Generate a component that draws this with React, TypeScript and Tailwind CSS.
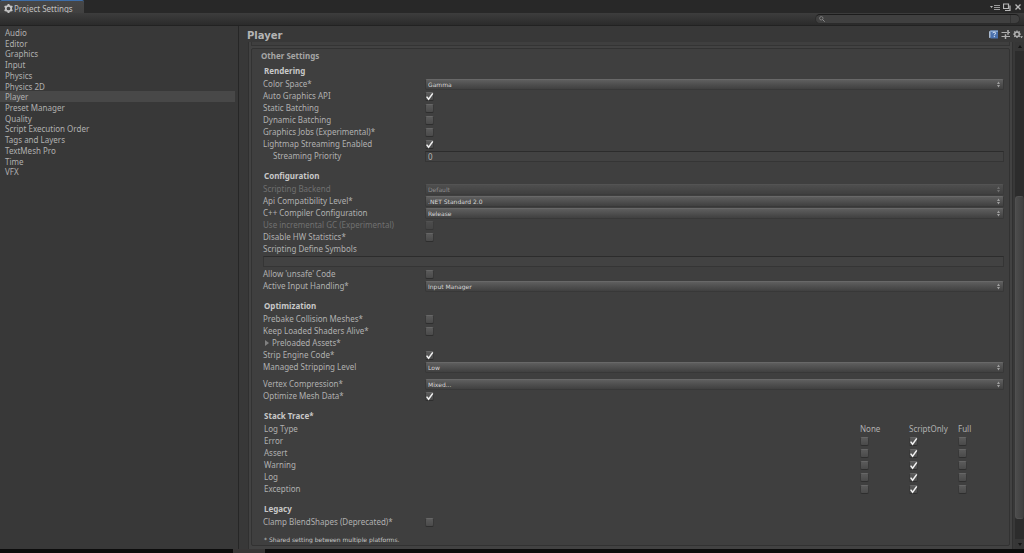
import { useState, type ReactNode } from 'react'

const categories = [
  'Audio',
  'Editor',
  'Graphics',
  'Input',
  'Physics',
  'Physics 2D',
  'Player',
  'Preset Manager',
  'Quality',
  'Script Execution Order',
  'Tags and Layers',
  'TextMesh Pro',
  'Time',
  'VFX',
]

const logTypes = ['Error', 'Assert', 'Warning', 'Log', 'Exception']
const traceModes = [
  { name: 'None', width: 'w-[49px]' },
  { name: 'ScriptOnly', width: 'w-[49px]' },
  { name: 'Full', width: 'w-[46px]' },
]

const toId = (label: string) => label.toLowerCase().replace(/[^a-z0-9]+/g, '-')

function GearIcon() {
  return (
    <svg viewBox="0 0 16 16" className="size-[9px] shrink-0 text-[#c4c4c4]" aria-hidden="true">
      <circle cx="8" cy="8" r="4.8" fill="none" stroke="currentColor" strokeWidth="3" />
      <g stroke="currentColor" strokeWidth="3.4">
        <path d="M8 0v3M8 13v3M1 4l2.7 1.5M12.3 10.5 15 12M1 12l2.7-1.5M12.3 5.5 15 4" />
      </g>
    </svg>
  )
}

function Check({ label, id, checked = false, disabled = false }: { label?: string; id?: string; checked?: boolean; disabled?: boolean }) {
  const [on, setOn] = useState(checked)
  return (
    <span className={`relative mt-[2px] block size-[9px] ${disabled ? 'opacity-50' : ''}`}>
      <input
        type="checkbox"
        id={id}
        aria-label={label}
        checked={on}
        disabled={disabled}
        onChange={() => setOn(!on)}
        className="block size-[9px] appearance-none rounded-[2px] border border-[#383838] border-t-[#666666] border-b-[#2e2e2e] bg-linear-to-b from-[#5a5a5a] to-[#4a4a4a]"
      />
      {on && (
        <svg viewBox="0 0 9 9" className="pointer-events-none absolute inset-0 size-[9px]" aria-hidden="true">
          <path d="M1.6 4.6 3.6 7.2 7.8 1.4" fill="none" stroke="#f2f2f2" strokeWidth="1.5" />
        </svg>
      )}
    </span>
  )
}

function Dropdown({ id, value, disabled = false }: { id: string; value: string; disabled?: boolean }) {
  return (
    <span className={`relative mt-px block h-[11px] ${disabled ? 'opacity-50' : ''}`}>
      <select
        id={id}
        disabled={disabled}
        className="block h-[11px] w-full appearance-none rounded-[2px] border border-[#383838] border-t-[#686868] bg-linear-to-b from-[#5e5e5e] to-[#404040] pl-[2px] font-['DejaVu_Sans',sans-serif] text-[6px] leading-[9px] text-[#d8d8d8] opacity-100"
      >
        <option>{value}</option>
      </select>
      <svg viewBox="0 0 5 7" className="pointer-events-none absolute top-[2px] right-[3px] h-[7px] w-[5px]" aria-hidden="true">
        <path d="M2.5 0.4 4 3H1zM2.5 6.6 1 4h3z" fill="#a0a0a0" />
      </svg>
    </span>
  )
}

function Field({ label, indent = false, disabled = false, children }: { label: string; indent?: boolean; disabled?: boolean; children: ReactNode }) {
  return (
    <div className="flex h-3">
      <label htmlFor={toId(label)} className={`w-[162px] shrink-0 whitespace-nowrap ${indent ? 'pl-[10px]' : ''} ${disabled ? 'text-[#707070]' : ''}`}>
        {label}
      </label>
      <div className="min-w-0 flex-1">{children}</div>
    </div>
  )
}

function Toggle({ label, checked, disabled }: { label: string; checked?: boolean; disabled?: boolean }) {
  return (
    <Field label={label} disabled={disabled}>
      <Check id={toId(label)} checked={checked} disabled={disabled} />
    </Field>
  )
}

function Choice({ label, value, disabled }: { label: string; value: string; disabled?: boolean }) {
  return (
    <Field label={label} disabled={disabled}>
      <Dropdown id={toId(label)} value={value} disabled={disabled} />
    </Field>
  )
}

const textBox = 'mt-px block h-[11px] w-full border border-[#353535] border-t-[#2c2c2c] bg-[#424242] px-[2px] text-[8px] leading-[9px] text-[#b4b4b4]'

function Section({ title, children }: { title: string; children: ReactNode }) {
  return (
    <section className="mb-[7px]">
      <h3 className="pl-px font-bold leading-[14px] text-[#c8c8c8]">{title}</h3>
      {children}
    </section>
  )
}

function StackTraceTable() {
  return (
    <table className="w-full table-fixed border-collapse text-left">
      <thead>
        <tr className="h-3">
          <th className="p-0 pl-px font-normal">Log Type</th>
          {traceModes.map((mode) => (
            <th key={mode.name} className={`${mode.width} p-0 font-normal`}>
              {mode.name}
            </th>
          ))}
        </tr>
      </thead>
      <tbody>
        {logTypes.map((type) => (
          <tr key={type} className="h-3">
            <th className="p-0 pl-px font-normal">{type}</th>
            {traceModes.map((mode) => (
              <td key={mode.name} className="p-0 align-top">
                <Check label={`${type}: ${mode.name}`} checked={mode.name === 'ScriptOnly'} />
              </td>
            ))}
          </tr>
        ))}
      </tbody>
    </table>
  )
}

function TitleBar() {
  return (
    <header className="flex h-[13px] justify-between bg-[#282828]">
      <div className="flex w-[84px] items-center gap-px rounded-t-[2px] border-t border-[#3d6da8] bg-linear-to-b from-[#464646] to-[#404040] pt-[3px] pl-1">
        <GearIcon />
        <h1 className="whitespace-nowrap leading-[9px] text-[#c0c0c0]">Project Settings</h1>
      </div>
      <div className="flex items-center gap-[3px] pr-[2px] text-[#b8b8b8]">
        <button aria-label="Window menu">
          <svg viewBox="0 0 10 8" className="h-2 w-[10px]">
            <path d="M0 3h3L1.500 5z" fill="currentColor" />
            <path d="M4 2.500h6M4 4.500h6M4 6.500h6" stroke="currentColor" strokeWidth=".8" />
          </svg>
        </button>
        <button aria-label="Maximize">
          <svg viewBox="0 0 8 8" className="size-2" fill="none" stroke="currentColor">
            <path d="M.5 1h5v4.500h-5zM0 1h6M7 2.500v5H2" strokeWidth="1.2" />
          </svg>
        </button>
        <button aria-label="Close">
          <svg viewBox="0 0 8 8" className="size-2" stroke="currentColor">
            <path d="m1.500 1.500 5 5M6.500 1.500l-5 5" strokeWidth="1.3" />
          </svg>
        </button>
      </div>
    </header>
  )
}

function SearchBar() {
  return (
    <div className="flex h-[13px] items-center justify-end border-b border-[#222222] bg-linear-to-b from-[#3d3d3d] to-[#2b2b2b] pr-1">
      <label className="flex h-[10px] w-[205px] items-center rounded-full border border-[#2b2b2b] border-t-[#1c1c1c] bg-[#404040] pl-[3px]">
        <svg viewBox="0 0 6 6" className="size-[6px] shrink-0" fill="none" stroke="#8c8c8c" aria-hidden="true">
          <circle cx="2.300" cy="2.300" r="1.700" strokeWidth=".8" />
          <path d="m3.500 3.500 2.200 2.200" />
        </svg>
        <input aria-label="Search settings" className="min-w-0 flex-1 bg-transparent px-1 text-[7px] leading-[8px] outline-none" />
        <span className="mr-2 h-[8px] w-px bg-[#333333]" />
      </label>
    </div>
  )
}

function Sidebar() {
  return (
    <nav className="w-[239px] shrink-0 border-r border-[#262626] pt-px pr-[3px]" aria-label="Categories">
      <ul className="grid h-[150px] auto-rows-fr">
        {categories.map((name) => (
          <li key={name} className={name === 'Player' ? 'bg-[#484848]' : ''}>
            <a href={`#${toId(name)}`} className="block pl-[5px] leading-[11px]">
              {name}
            </a>
          </li>
        ))}
      </ul>
    </nav>
  )
}

function PanelHeader() {
  return (
    <div className="flex h-4 items-center justify-between pr-px pl-2">
      <h2 className="pt-[3px] font-['DejaVu_Sans',sans-serif] text-[10px] font-bold leading-[13px] text-[#b4b4b4]">Player</h2>
      <div className="flex items-center gap-[3px] text-[#b0b0b0]">
        <button aria-label="Help">
          <svg viewBox="0 0 9 9" className="size-[9px]">
            <path d="M0 1.500 2 .5v7L0 8z" fill="#a9b9cf" />
            <path d="M1.500.5H9v8H1.500z" fill="#4a71ad" />
            <path d="M1.500.5H9v1.500H1.500z" fill="#86a6d0" />
            <path d="M3.800 3.200c0-1.400 2.800-1.400 2.800 0 0 1-1.300 1-1.300 2.100M5.300 6.100v1" stroke="#e6eefa" strokeWidth="1" fill="none" />
          </svg>
        </button>
        <button aria-label="Presets">
          <svg viewBox="0 0 9 9" className="size-[9px]" stroke="currentColor" fill="none">
            <path d="M.5 2.500H6M.5 6.500h3.500M4.500 6.500H9M7 2.500h2" strokeWidth="1.100" />
            <path d="M7 0v4.800M4.500 4.200V9" strokeWidth="1.500" />
          </svg>
        </button>
        <button aria-label="Options">
          <svg viewBox="0 0 10 9" className="h-[9px] w-[10px]">
            <circle cx="4" cy="4.200" r="2.300" fill="none" stroke="currentColor" strokeWidth="1.500" />
            <path d="M4 .4v1.300M4 6.700V8M.2 4.200h1.300M6.500 4.200h1.300M1.300 1.500l.9.900M5.800 6l.9.900M1.300 6.900l.9-.9M5.800 2.400l.9-.9" stroke="currentColor" strokeWidth="1.300" />
            <path d="M7 6.300h3L8.500 8.300z" fill="currentColor" />
          </svg>
        </button>
      </div>
    </div>
  )
}

function ScrollBar() {
  return (
    <div className="flex w-[9px] shrink-0 flex-col bg-[#2c2c2c]" aria-hidden="true">
      <div className="flex h-[9px] items-center justify-center bg-[#363636]">
        <svg viewBox="0 0 4 3" className="h-[3px] w-1">
          <path d="M2 0l2 3H0z" fill="#151515" />
        </svg>
      </div>
      <div className="grow-[146]" />
      <div className="grow-[322] rounded-[3px] border border-[#505050] border-r-[#3c3c3c] bg-linear-to-r from-[#4c4c4c] to-[#404040]" />
      <div className="grow-[20]" />
      <div className="flex h-[10px] items-center justify-center bg-[#363636]">
        <svg viewBox="0 0 4 3" className="h-[3px] w-1">
          <path d="M2 3l2-3H0z" fill="#151515" />
        </svg>
      </div>
    </div>
  )
}

function PlayerSettings() {
  return (
    <div className="ml-[9px] flex min-w-0 flex-1 flex-col border-x border-[#303030] bg-[#424242] px-[2px] pb-[3px]">
      <div className="h-1 border-x border-b border-[#343434] bg-[#3f3f3f]" />
      <div className="mt-[2px] flex-1 rounded-[2px] border border-[#323232] bg-[#3f3f3f] pt-[2px] pr-[5px] pl-[9px]">
        <h3 className="mb-[3px] font-bold leading-[10px] text-[#a6a6a6]">Other Settings</h3>
        <div className="pl-[2px]">
          <Section title="Rendering">
            <Choice label="Color Space*" value="Gamma" />
            <Toggle label="Auto Graphics API" checked />
            <Toggle label="Static Batching" />
            <Toggle label="Dynamic Batching" />
            <Toggle label="Graphics Jobs (Experimental)*" />
            <Toggle label="Lightmap Streaming Enabled" checked />
            <Field label="Streaming Priority" indent>
              <input id={toId('Streaming Priority')} defaultValue="0" className={textBox} />
            </Field>
          </Section>
          <Section title="Configuration">
            <Choice label="Scripting Backend" value="Default" disabled />
            <Choice label="Api Compatibility Level*" value=".NET Standard 2.0" />
            <Choice label="C++ Compiler Configuration" value="Release" />
            <Toggle label="Use incremental GC (Experimental)" disabled />
            <Toggle label="Disable HW Statistics*" />
            <label htmlFor="define-symbols" className="block h-3">
              Scripting Define Symbols
            </label>
            <div className="flex h-[13px]">
              <input id="define-symbols" className={textBox} />
            </div>
            <Toggle label="Allow 'unsafe' Code" />
            <Choice label="Active Input Handling*" value="Input Manager" />
          </Section>
          <Section title="Optimization">
            <Toggle label="Prebake Collision Meshes*" />
            <Toggle label="Keep Loaded Shaders Alive*" />
            <button className="flex h-3 items-center gap-[3px] pl-[2px]">
              <svg viewBox="0 0 4 6" className="h-[6px] w-1" aria-hidden="true">
                <path d="M0 0l4 3-4 3z" fill="#808080" />
              </svg>
              Preloaded Assets*
            </button>
            <Toggle label="Strip Engine Code*" checked />
            <Choice label="Managed Stripping Level" value="Low" />
            <div className="h-[5px]" />
            <Choice label="Vertex Compression*" value="Mixed..." />
            <Toggle label="Optimize Mesh Data*" checked />
          </Section>
          <Section title="Stack Trace*">
            <StackTraceTable />
          </Section>
          <Section title="Legacy">
            <Toggle label="Clamp BlendShapes (Deprecated)*" />
          </Section>
          <p className="pl-px font-['DejaVu_Sans',sans-serif] text-[6px] leading-[10px] text-[#c8c8c8]">* Shared setting between multiple platforms.</p>
        </div>
      </div>
    </div>
  )
}

export default function App() {
  return (
    <div className="flex min-h-screen flex-col bg-[#383838] font-['Noto_Sans',sans-serif] text-[8px] leading-[12px] text-[#b0b0b0]">
      <TitleBar />
      <SearchBar />
      <div className="flex flex-1">
        <Sidebar />
        <main className="flex min-w-0 flex-1 flex-col">
          <PanelHeader />
          <div className="flex flex-1">
            <PlayerSettings />
            <div className="w-[2px] shrink-0" />
            <ScrollBar />
          </div>
        </main>
      </div>
      <footer className="flex h-[4px] bg-[#0c0c0c] pl-[233px]">
        <div className="w-8 bg-[#383636]" />
      </footer>
    </div>
  )
}
